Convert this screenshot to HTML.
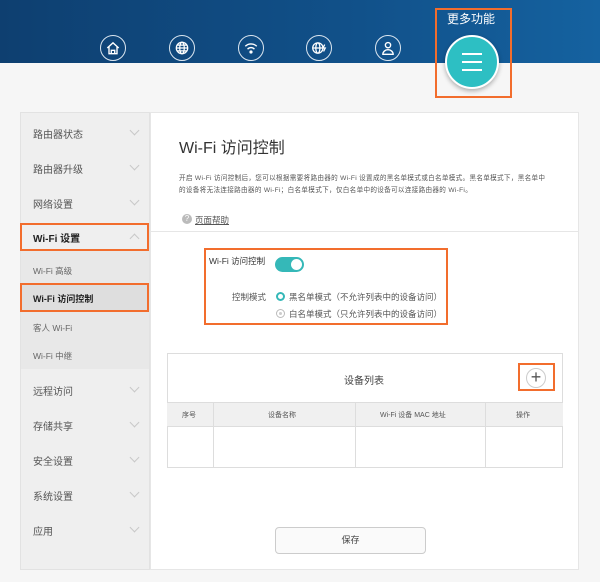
<!DOCTYPE html>
<html><head><meta charset="utf-8"><style>
*{margin:0;padding:0;box-sizing:border-box}
body{width:600px;height:582px;background:#f6f6f6;font-family:"Liberation Sans","Noto Sans CJK SC",sans-serif;position:relative;overflow:hidden;color:#333}
.hdr{position:absolute;left:0;top:0;width:600px;height:63px;background:linear-gradient(90deg,#0e3f70,#11518a 60%,#1562a0)}
.ic{position:absolute;top:35px;width:26px;height:26px;border:1.3px solid #dbe6f0;border-radius:50%}
.ic svg{position:absolute;left:4px;top:4px}
.ab{position:absolute;color:#fff;font-size:12px}
.box{position:absolute;border:2px solid #f26d2d}
.side{position:absolute;left:20px;top:112px;width:130px;height:458px;background:#efefef;border:1px solid #e2e2e2}
.it{position:absolute;left:12px;font-size:10px;color:#555}
.chev{position:absolute;left:110px;width:7px;height:7px;border-right:1px solid #c8c8c8;border-bottom:1px solid #c8c8c8;transform:rotate(45deg)}
.main{position:absolute;left:150px;top:112px;width:429px;height:458px;background:#fff;border:1px solid #e6e6e6}
.t{position:absolute;font-size:7px;color:#555;white-space:nowrap}
</style></head><body>
<div class="hdr"></div>
<div class="ab" style="left:447px;top:10px">更多功能</div>
<div class="ic" style="left:100px"><svg width="16" height="16" viewBox="0 0 14 14" fill="none" stroke="#fff" stroke-width="1.2"><path d="M2 7L7 2.5 12 7M3.5 6v6h7V6M5.5 12V9h3v3"/></svg></div>
<div class="ic" style="left:169px"><svg width="16" height="16" viewBox="0 0 14 14" fill="none" stroke="#fff" stroke-width="1.1"><circle cx="7" cy="7" r="5"/><ellipse cx="7" cy="7" rx="2" ry="5"/><path d="M2 7h10M2.8 4.5h8.4M2.8 9.5h8.4"/></svg></div>
<div class="ic" style="left:238px"><svg width="16" height="16" viewBox="0 0 14 14" fill="none" stroke="#fff" stroke-width="1.2"><path d="M2 5.5a7 7 0 0 1 10 0M4 8a4 4 0 0 1 6 0"/><circle cx="7" cy="10.5" r="0.8" fill="#fff"/></svg></div>
<div class="ic" style="left:306px"><svg width="16" height="16" viewBox="0 0 14 14" fill="none" stroke="#fff" stroke-width="1.1"><circle cx="6" cy="7" r="4.5"/><ellipse cx="6" cy="7" rx="1.8" ry="4.5"/><path d="M1.5 7h9M12 4l-1.5 3h2L11 10"/></svg></div>
<div class="ic" style="left:375px"><svg width="16" height="16" viewBox="0 0 14 14" fill="none" stroke="#fff" stroke-width="1.2"><circle cx="7" cy="4.5" r="2.3"/><path d="M2.5 12.5a4.5 4 0 0 1 9 0z"/></svg></div>
<div style="position:absolute;left:445px;top:35px;width:54px;height:54px;border-radius:50%;background:#2dbfc3;border:2px solid #fff;box-shadow:0 2px 5px rgba(0,0,0,.3)">
<div style="position:absolute;left:15px;top:16px;width:20px;height:2px;background:#fff"></div>
<div style="position:absolute;left:15px;top:24px;width:20px;height:2px;background:#fff"></div>
<div style="position:absolute;left:15px;top:32px;width:20px;height:2px;background:#fff"></div></div>
<div class="box" style="left:435px;top:8px;width:77px;height:90px"></div>

<div class="side">
<div class="it" style="top:13px">路由器状态</div><div class="chev" style="top:14px"></div>
<div class="it" style="top:48px">路由器升级</div><div class="chev" style="top:49px"></div>
<div class="it" style="top:83px">网络设置</div><div class="chev" style="top:84px"></div>
<div class="it" style="top:117px;font-weight:bold;color:#222">Wi-Fi 设置</div><div class="chev" style="top:122px;transform:rotate(225deg)"></div>
<div style="position:absolute;left:0;top:138px;width:128px;height:118px;background:#e8e8e8"></div>
<div class="it" style="top:152px;font-size:8.5px;color:#666">Wi-Fi 高级</div>
<div style="position:absolute;left:0;top:172px;width:128px;height:26px;background:#dedede"></div>
<div class="it" style="top:179px;font-size:9px;font-weight:bold;color:#222">Wi-Fi 访问控制</div>
<div class="it" style="top:209px;font-size:8.5px;color:#666">客人 Wi-Fi</div>
<div class="it" style="top:237px;font-size:8.5px;color:#666">Wi-Fi 中继</div>
<div class="it" style="top:270px">远程访问</div><div class="chev" style="top:271px"></div>
<div class="it" style="top:305px">存储共享</div><div class="chev" style="top:306px"></div>
<div class="it" style="top:340px">安全设置</div><div class="chev" style="top:341px"></div>
<div class="it" style="top:375px">系统设置</div><div class="chev" style="top:376px"></div>
<div class="it" style="top:410px">应用</div><div class="chev" style="top:411px"></div>
</div>
<div class="box" style="left:20px;top:223px;width:129px;height:28px"></div>
<div class="box" style="left:20px;top:283px;width:129px;height:29px"></div>

<div class="main">
<div style="position:absolute;left:28px;top:21px;font-size:16px;color:#333">Wi-Fi 访问控制</div>
<div class="t" style="left:28px;top:59px;font-size:6.6px;letter-spacing:0.3px">开启 Wi-Fi 访问控制后，您可以根据需要将路由器的 Wi-Fi 设置成的黑名单模式或白名单模式。黑名单模式下，黑名单中</div>
<div class="t" style="left:28px;top:71px;font-size:6.6px;letter-spacing:0.3px">的设备将无法连接路由器的 Wi-Fi；白名单模式下，仅白名单中的设备可以连接路由器的 Wi-Fi。</div>
<div style="position:absolute;left:31px;top:101px;width:10px;height:10px;border-radius:50%;background:#bbb;color:#fff;font-size:8px;text-align:center;line-height:10px">?</div>
<div class="t" style="left:44px;top:101px;font-size:8.5px;text-decoration:underline">页面帮助</div>
<div style="position:absolute;left:0;top:118px;width:428px;height:1px;background:#e6e6e6"></div>
<div class="t" style="left:58px;top:142px;font-size:8.5px;color:#333">Wi-Fi 访问控制</div>
<div style="position:absolute;left:124px;top:144px;width:29px;height:15px;border-radius:8px;background:#35b8b8"><div style="position:absolute;right:2px;top:2px;width:11px;height:11px;border-radius:50%;background:#fff"></div></div>
<div class="t" style="left:81px;top:178px;font-size:8.5px">控制模式</div>
<div style="position:absolute;left:125px;top:179px;width:9px;height:9px;border-radius:50%;border:2.5px solid #35b8b8"></div>
<div class="t" style="left:138px;top:178px;font-size:8.5px">黑名单模式（不允许列表中的设备访问）</div>
<div style="position:absolute;left:125px;top:196px;width:9px;height:9px;border-radius:50%;border:1px solid #bbb"><div style="margin:2px;width:3px;height:3px;border-radius:50%;background:#ccc"></div></div>
<div class="t" style="left:138px;top:195px;font-size:8.5px">白名单模式（只允许列表中的设备访问）</div>
<div style="position:absolute;left:16px;top:240px;width:396px;height:115px;border:1px solid #ddd"></div>
<div style="position:absolute;left:193px;top:259px;font-size:10px;color:#444">设备列表</div>
<div style="position:absolute;left:375px;top:255px;width:20px;height:20px;border-radius:50%;border:1px solid #ccc;text-align:center;line-height:17px;font-size:18px;color:#555">+</div>
<div style="position:absolute;left:16px;top:289px;width:396px;height:25px;background:#f0f0f0;border-top:1px solid #ddd;border-bottom:1px solid #ddd"></div>
<div style="position:absolute;left:62px;top:289px;width:1px;height:66px;background:#ddd"></div>
<div style="position:absolute;left:204px;top:289px;width:1px;height:66px;background:#ddd"></div>
<div style="position:absolute;left:334px;top:289px;width:1px;height:66px;background:#ddd"></div>
<div class="t" style="left:31px;top:297px">序号</div>
<div class="t" style="left:117px;top:297px">设备名称</div>
<div class="t" style="left:229px;top:297px">Wi-Fi 设备 MAC 地址</div>
<div class="t" style="left:365px;top:297px">操作</div>
<div style="position:absolute;left:124px;top:414px;width:151px;height:27px;border:1px solid #ccc;border-radius:4px;background:#fafafa;text-align:center;line-height:25px;font-size:9px;color:#444">保存</div>
</div>
<div class="box" style="left:204px;top:248px;width:244px;height:77px"></div>
<div class="box" style="left:518px;top:363px;width:37px;height:28px"></div>
</body></html>
